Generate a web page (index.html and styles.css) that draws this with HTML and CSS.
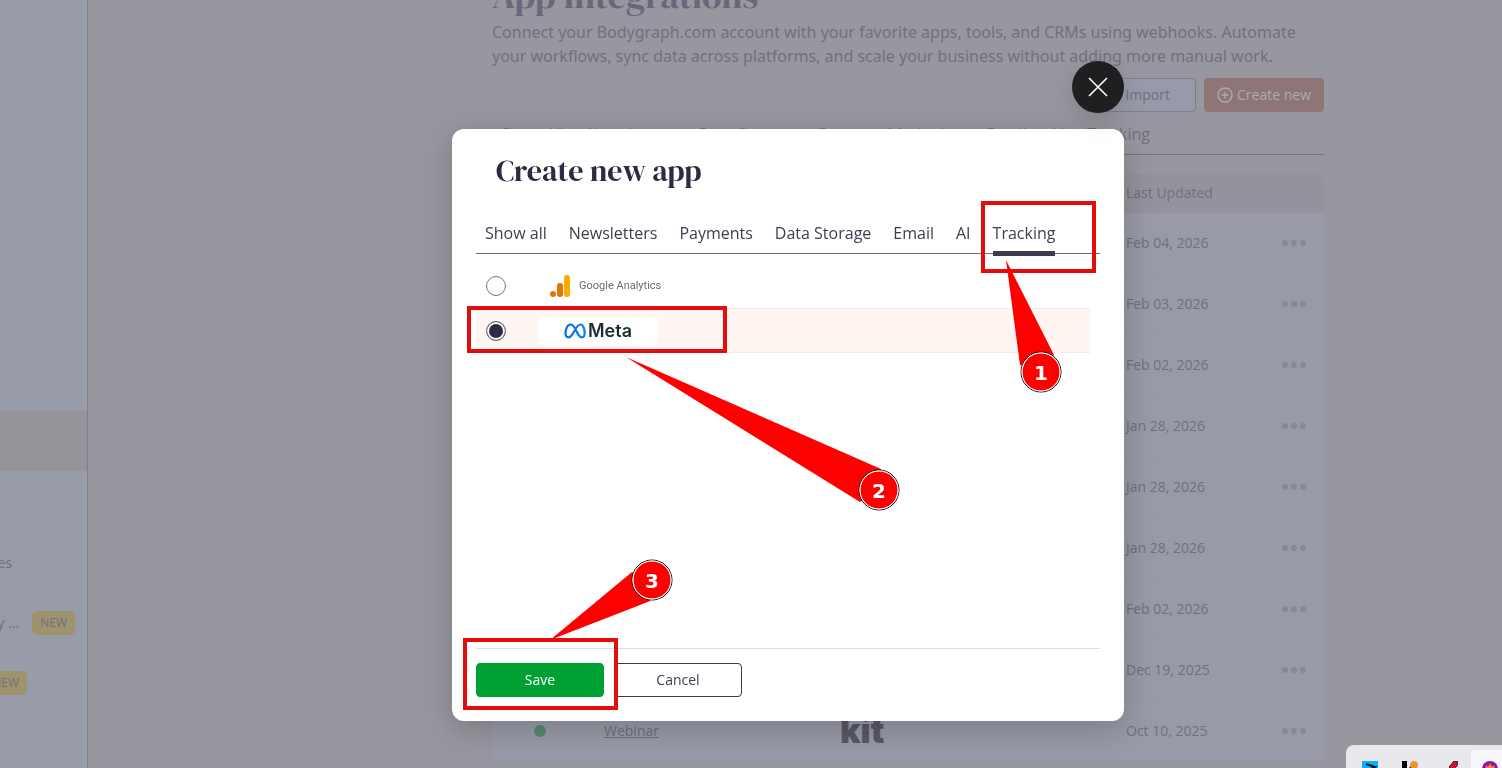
FILE: index.html
```html
<!DOCTYPE html>
<html lang="en">
<head>
    <meta charset="UTF-8">
    <meta name="viewport" content="width=device-width, initial-scale=1.0">
    <title>App Integrations</title>
    <link rel="stylesheet" href="styles.css">
</head>
<body>
    <div class="page">
        <nav class="sidebar">
            <a href="#" class="side-item active"></a>
            <a href="#" class="side-item"></a>
            <a href="#" class="side-item short">es</a>
            <a href="#" class="side-item">y ... <span class="badge">NEW</span></a>
            <a href="#" class="side-item medium"><span class="badge">NEW</span></a>
        </nav>

        <main class="content">
            <h1>App Integrations</h1>
            <p class="intro">Connect your Bodygraph.com account with your favorite apps, tools, and CRMs using webhooks. Automate your workflows, sync data across platforms, and scale your business without adding more manual work.</p>
            <div class="toolbar">
                <button type="button" class="btn-import">Import</button>
                <button type="button" class="btn-create">
                    <svg width="16" height="16" viewBox="0 0 16 16" fill="none" stroke="currentColor" stroke-width="1.4"><circle cx="8" cy="8" r="7"/><path d="M8 4.500v7M4.500 8h7"/></svg>
                    Create new
                </button>
            </div>
            <div class="page-tabs">
                <div class="page-tabs-list">
                    <a href="#">Show All</a>
                    <a href="#">Newsletters</a>
                    <a href="#">Data Storage</a>
                    <a href="#">Forms</a>
                    <a href="#">Marketing</a>
                    <a href="#">Email</a>
                    <a href="#">AI</a>
                    <a href="#">Tracking</a>
                </div>
            </div>
            <table class="apps-table">
                <thead>
                    <tr>
                        <th class="col-status"></th>
                        <th class="col-name"></th>
                        <th class="col-app"></th>
                        <th class="col-date">Last Updated</th>
                        <th class="col-menu"></th>
                    </tr>
                </thead>
                <tbody>
                    <tr><td></td><td></td><td></td><td>Feb 04, 2026</td><td><button type="button" class="dots" aria-label="More"><i></i><i></i><i></i></button></td></tr>
                    <tr><td></td><td></td><td></td><td>Feb 03, 2026</td><td><button type="button" class="dots" aria-label="More"><i></i><i></i><i></i></button></td></tr>
                    <tr><td></td><td></td><td></td><td>Feb 02, 2026</td><td><button type="button" class="dots" aria-label="More"><i></i><i></i><i></i></button></td></tr>
                    <tr><td></td><td></td><td></td><td>Jan 28, 2026</td><td><button type="button" class="dots" aria-label="More"><i></i><i></i><i></i></button></td></tr>
                    <tr><td></td><td></td><td></td><td>Jan 28, 2026</td><td><button type="button" class="dots" aria-label="More"><i></i><i></i><i></i></button></td></tr>
                    <tr><td></td><td></td><td></td><td>Jan 28, 2026</td><td><button type="button" class="dots" aria-label="More"><i></i><i></i><i></i></button></td></tr>
                    <tr><td></td><td></td><td></td><td>Feb 02, 2026</td><td><button type="button" class="dots" aria-label="More"><i></i><i></i><i></i></button></td></tr>
                    <tr><td></td><td></td><td></td><td>Dec 19, 2025</td><td><button type="button" class="dots" aria-label="More"><i></i><i></i><i></i></button></td></tr>
                    <tr>
                        <td><span class="status"></span></td>
                        <td><a href="#">Webinar</a></td>
                        <td><span class="kit">kit</span></td>
                        <td>Oct 10, 2025</td>
                        <td><button type="button" class="dots" aria-label="More"><i></i><i></i><i></i></button></td>
                    </tr>
                </tbody>
            </table>
        </main>
    </div>

    <div class="overlay">
        <form class="modal" role="dialog" aria-labelledby="modal-title">
            <button type="button" class="close" aria-label="Close">
                <svg width="20" height="20" viewBox="0 0 20 20" fill="none" stroke="#fff" stroke-width="1.6"><path d="M1 1l18 18M19 1L1 19"/></svg>
            </button>
            <h2 id="modal-title">Create new app</h2>
            <div class="tabs">
                <a href="#">Show all</a>
                <a href="#">Newsletters</a>
                <a href="#">Payments</a>
                <a href="#">Data Storage</a>
                <a href="#">Email</a>
                <a href="#">AI</a>
                <a href="#" class="active">Tracking</a>
            </div>
            <div class="options">
                <label class="option">
                    <input type="radio" name="app" value="google">
                    <span class="logo logo-google">
                        <svg width="20" height="22" viewBox="0 0 20 22">
                            <rect x="14" y="0" width="6" height="22" rx="3" fill="#f9ab00"/>
                            <rect x="7" y="8" width="6" height="14" rx="3" fill="#e37400"/>
                            <circle cx="3" cy="19" r="3" fill="#e37400"/>
                        </svg>
                        Google Analytics
                    </span>
                </label>
                <label class="option selected">
                    <input type="radio" name="app" value="meta" checked>
                    <span class="logo logo-meta">
                        <svg width="22" height="16" viewBox="0 0 22 16" fill="none">
                            <defs>
                                <linearGradient id="meta-blue" x1="0" x2="1">
                                    <stop offset="0" stop-color="#0a6be0"/>
                                    <stop offset="1" stop-color="#0a84f2"/>
                                </linearGradient>
                            </defs>
                            <path d="M11 5.200C9.700 2.900 8.300 1.500 6.500 1.500 3.600 1.500 1.500 6 1.500 10c0 2.700 1 4.300 2.900 4.300C6.800 14.300 8.300 11.600 11 7c2-3.500 3.400-5.500 5.500-5.500 2.500 0 4.200 4.500 4.200 8.500 0 2.700-1 4.300-2.900 4.300-2.300 0-3.800-3-6.800-9.100z" stroke="url(#meta-blue)" stroke-width="2.200" stroke-linejoin="round"/>
                        </svg>
                        Meta
                    </span>
                </label>
            </div>
            <div class="actions">
                <button type="submit" class="btn btn-save">Save</button>
                <button type="button" class="btn">Cancel</button>
            </div>

            <!-- numbered steps drawn over the dialog -->
            <svg class="steps" width="672" height="592" viewBox="0 0 672 592">
                <g class="step-box">
                    <rect x="531" y="74" width="111" height="68"/>
                    <rect x="17" y="179" width="256" height="43"/>
                    <rect x="13" y="511" width="151" height="68"/>
                </g>
                <g class="step-arrow">
                    <path d="M554 131L568 236 589 243 602 226z"/>
                    <path d="M174 228L429 340 427 361 408 373z"/>
                    <path d="M98 511L180 443 200 451 198 472z"/>
                </g>
                <g class="step-ring">
                    <circle cx="589" cy="243" r="20"/>
                    <circle cx="427" cy="361" r="20"/>
                    <circle cx="200" cy="451" r="20"/>
                </g>
                <g class="step-dot">
                    <circle cx="589" cy="243" r="19"/>
                    <circle cx="427" cy="361" r="19"/>
                    <circle cx="200" cy="451" r="19"/>
                </g>
                <g class="step-number">
                    <text x="589" y="251">1</text>
                    <text x="427" y="369">2</text>
                    <text x="200" y="459">3</text>
                </g>
            </svg>
        </form>
    </div>

    <div class="tray">
        <svg width="16" height="16" viewBox="0 0 16 16"><path fill="#00b4f5" d="M0 0h16v16H0z"/><path d="M4 3l9 3-8 4" fill="none" stroke="#113" stroke-width="2"/></svg>
        <svg width="16" height="16" viewBox="0 0 16 16"><path d="M0 0h5v16H0z"/><path d="M5 9l4-4 2 4v7H5z"/><circle cx="12" cy="4" r="4" fill="#e09a35"/></svg>
        <svg width="16" height="16" viewBox="0 0 16 16"><path d="M0 7h9l-1 5H3z" fill="#3b7f62"/><path d="M7 6l5-6 4 0-1 5-5 4z" fill="#d3122f" stroke="#222"/></svg>
        <div class="tray-current">
            <svg width="16" height="16" viewBox="0 0 16 16"><circle cx="8" cy="8" r="8" fill="#8a12b8"/><path d="M3 9l1-5 2 2 2-4 2 4 2-2 1 5z" fill="#ff8a1c"/></svg>
        </div>
    </div>
</body>
</html>
```
FILE: styles.css
```css
* {
    box-sizing: border-box;
}
body {
    margin: 0;
    font-family: "Open Sans", "Noto Sans", sans-serif;
    font-size: 14px;
    line-height: 18px;
    color: #70707e;
    background-color: #98979f;
    overflow: hidden;
}
a {
    color: inherit;
    text-decoration: none;
}
button {
    font: inherit;
    color: inherit;
    cursor: pointer;
}
h1, h2 {
    margin: 0;
    font-family: "DM Serif Display", "Liberation Serif", serif;
    font-weight: 400;
}

/* page behind the dialog */
.page {
    display: flex;
    height: 100vh;
    overflow: hidden;
}
.sidebar {
    flex: 0 0 88px;
    padding-top: 411px;
    background-color: #989ba8;
    border-right: 1px solid #80808c;
    overflow: hidden;
}
.side-item {
    display: flex;
    align-items: center;
    justify-content: flex-end;
    gap: 13px;
    height: 60px;
    padding-right: 12px;
    white-space: nowrap;
}
.side-item.active {
    margin-bottom: 2px;
    background-color: #97939b;
}
.side-item.short {
    padding-right: 75px;
}
.side-item.medium {
    padding-right: 60px;
}
.badge {
    padding: 0 8px;
    border-radius: 5px;
    background-color: #9e936c;
    font-size: 12px;
    line-height: 24px;
}
.content {
    flex: 0 1 832px;
    margin-left: 404px;
    margin-top: -28px;
}
h1 {
    font-size: 36px;
    line-height: 48px;
    color: #69687a;
}
.intro {
    margin: 0;
    font-family: "Noto Sans", sans-serif;
    font-size: 16px;
    line-height: 24px;
}
.toolbar {
    display: flex;
    justify-content: flex-end;
    gap: 8px;
    margin-top: 10px;
}
.toolbar button {
    height: 34px;
    border-radius: 4px;
}
.btn-import {
    width: 112px;
    padding: 0 25px;
    border: 1px solid #7d7d8b;
    background-color: #989aa9;
    text-align: right;
}
.btn-create {
    display: flex;
    align-items: center;
    justify-content: center;
    gap: 4px;
    width: 120px;
    padding: 0;
    border: none;
    background-color: #8f7577;
}
.toolbar .btn-create {
    color: #adabb4;
    font-weight: 500;
}
.page-tabs {
    margin-bottom: 19px;
    padding: 10px 0 8px 9px;
    border-bottom: 1px solid #737380;
    font-size: 16px;
    line-height: 24px;
}
.page-tabs-list {
    display: flex;
    justify-content: space-between;
    max-width: 649px;
}
.apps-table {
    width: 100%;
    table-layout: fixed;
    border-collapse: separate;
    border-spacing: 0;
    border-radius: 10px;
    background-color: #989aa7;
    overflow: hidden;
}
.apps-table th {
    height: 39px;
    padding: 0 0 2px;
    background-color: #96929b;
    font-weight: 500;
    text-align: left;
}
.apps-table td {
    height: 61px;
    padding: 0;
    border-bottom: 1px solid #9697a3;
}
.apps-table td a {
    text-decoration: underline;
}
.col-status {
    width: 112px;
}
.col-name {
    width: 236px;
}
.col-date {
    width: 156px;
}
.col-menu {
    width: 42px;
}
.status {
    display: block;
    width: 12px;
    height: 12px;
    margin-left: 42px;
    border-radius: 50%;
    background-color: #568a72;
}
.kit {
    display: block;
    font-family: Inter, sans-serif;
    font-size: 34px;
    font-weight: 900;
    line-height: 28px;
    color: #585866;
}
.dots {
    display: flex;
    gap: 3px;
    padding: 0;
    border: none;
    background: none;
}
.dots i {
    width: 6px;
    height: 6px;
    border-radius: 50%;
    background-color: #898995;
}

/* dialog */
.overlay {
    position: fixed;
    inset: 0;
    display: flex;
    justify-content: center;
    align-items: flex-start;
    padding: 129px 0 0 74px;
}
.modal {
    position: relative;
    display: flex;
    flex-direction: column;
    width: 672px;
    min-height: 592px;
    padding: 24px;
    border-radius: 12px;
    background-color: #fff;
    box-shadow: 0 8px 32px rgba(0, 0, 0, 0.2);
    color: #3d3f50;
}
.close {
    position: absolute;
    top: -68px;
    right: 0;
    display: flex;
    align-items: center;
    justify-content: center;
    width: 52px;
    height: 52px;
    padding: 0;
    border: none;
    border-radius: 50%;
    background-color: #1f1f22;
    box-shadow: 0 8px 24px rgba(0, 0, 0, 0.15);
}
h2 {
    padding-left: 20px;
    font-size: 30px;
    line-height: 36px;
    color: #2b2c43;
}
.tabs {
    display: flex;
    gap: 22px;
    margin-top: 32px;
    padding-left: 9px;
    border-bottom: 1px solid #6b6c78;
    font-size: 16px;
    line-height: 24px;
}
.tabs a {
    padding-bottom: 8px;
}
.tabs .active {
    margin-bottom: -3px;
    padding-bottom: 6px;
    border-bottom: 5px solid #3a3c4e;
}
.options {
    flex: 1;
    padding: 9px 10px 0 0;
}
.option {
    display: flex;
    align-items: center;
    gap: 32px;
    height: 45px;
    padding-left: 10px;
}
.option.selected {
    background-color: #fff6f2;
    border: solid #f3ebe8;
    border-width: 1px 0;
}
.option input {
    appearance: none;
    width: 20px;
    height: 20px;
    margin: 0;
    border: 1px solid #777783;
    border-radius: 50%;
    background-color: #fff;
}
.option input:checked {
    background-color: #2b2c43;
    box-shadow: inset 0 0 0 2px #fff;
}
.logo {
    display: flex;
    align-items: center;
    width: 120px;
    height: 28px;
    border-radius: 6px;
    background-color: #fff;
    white-space: nowrap;
}
.logo svg {
    flex: none;
}
.logo-google {
    gap: 9px;
    padding-left: 12px;
    font-family: Roboto, sans-serif;
    font-size: 11px;
    color: #6a6d71;
}
.logo-meta {
    gap: 2px;
    padding-left: 26px;
    font-family: Inter, sans-serif;
    font-size: 18px;
    font-weight: 600;
    color: #1c2b33;
}
.actions {
    display: flex;
    gap: 10px;
    padding-top: 14px;
    border-top: 1px solid #dddde0;
}
.btn {
    width: 128px;
    height: 34px;
    border: 1px solid #3a3c4e;
    border-radius: 4px;
    background-color: #fff;
}
.btn-save {
    border-color: #00a032;
    background-color: #00a032;
    color: #fff;
    font-weight: 500;
}

/* steps */
.steps {
    position: absolute;
    top: 0;
    left: 0;
    pointer-events: none;
}
.step-box {
    fill: none;
    stroke: #e20d0d;
    stroke-width: 4;
}
.step-arrow {
    fill: #f00;
}
.step-ring {
    fill: #fff;
    stroke: #111;
    stroke-width: 1;
}
.step-dot {
    fill: #f00;
    stroke: #fff;
    stroke-width: 1;
}
.step-number {
    fill: #fff;
    font-family: "DejaVu Sans", sans-serif;
    font-size: 20px;
    font-weight: bold;
    text-anchor: middle;
}

/* tray popup in the corner of the window */
.tray {
    position: fixed;
    right: 0;
    bottom: 0;
    display: flex;
    gap: 24px;
    width: 156px;
    height: 23px;
    padding: 16px 0 0 16px;
    border-radius: 8px 0 0 0;
    background-color: #e9e8ec;
    overflow: hidden;
}
.tray svg {
    flex: none;
}
.tray-current {
    flex: none;
    width: 40px;
    height: 30px;
    margin: -11px 0 0 -11px;
    padding: 11px;
    border-radius: 4px;
    background-color: #f8f7fb;
}
```
